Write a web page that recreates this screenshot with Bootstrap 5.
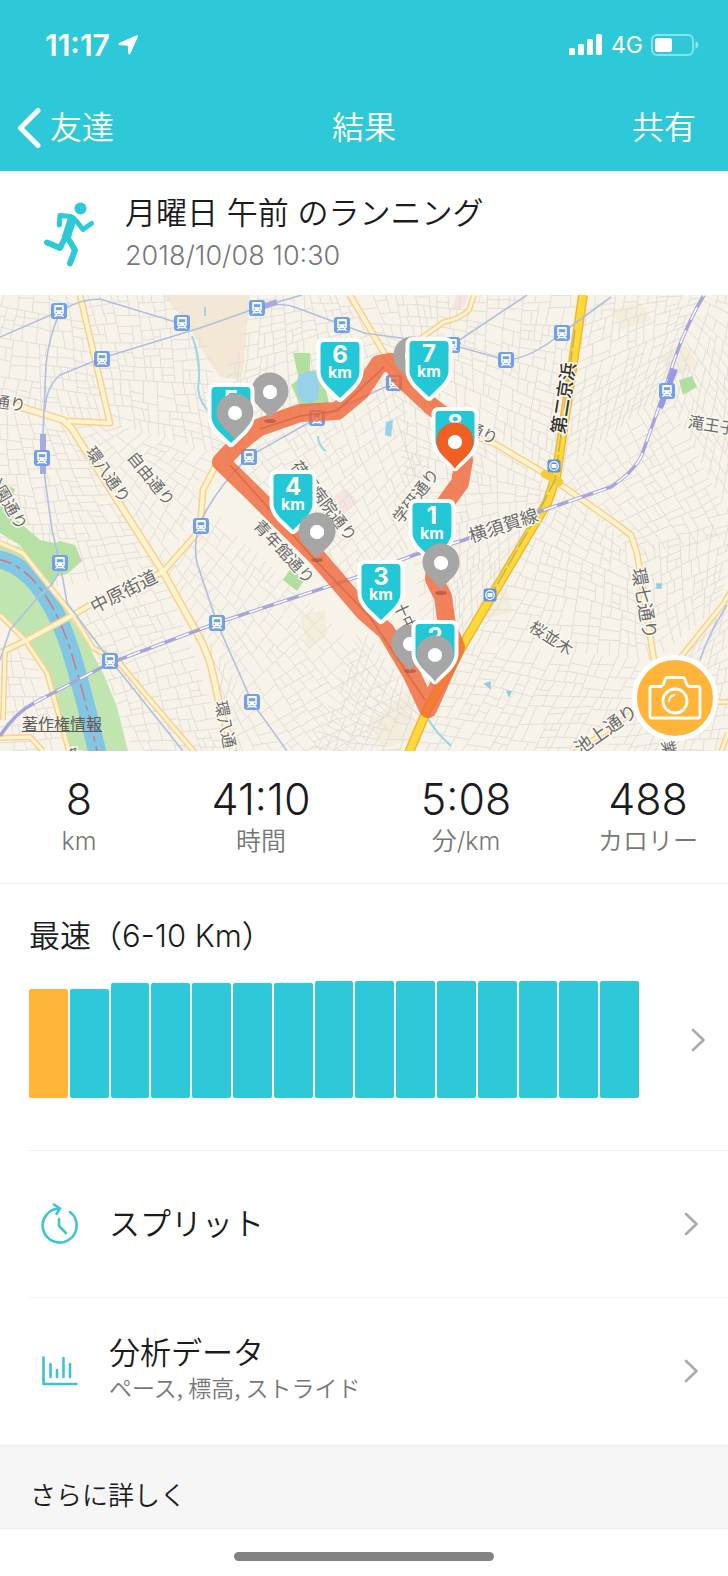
<!DOCTYPE html>
<html lang="ja">
<head>
<meta charset="utf-8">
<meta name="viewport" content="width=device-width, initial-scale=1">
<title>結果</title>
<link href="https://cdn.jsdelivr.net/npm/bootstrap@5.3.0/dist/css/bootstrap.min.css" rel="stylesheet">
<style>
:root{--teal:#2dc9d9;--amber:#ffb53a;--ink:#1c1c1e;--soft:#777}
body{font-family:Inter,"Noto Sans CJK JP",sans-serif;font-weight:350;color:var(--ink);background:#fff}
.app-top{background:var(--teal);color:#fff;padding-bottom:5px}
.status{height:90px;padding:0 29px 0 45px;font-size:30px;font-weight:600}
.status .net{font-size:23px;font-weight:400}
.topnav{height:76px;padding:0 16px;display:grid;grid-template-columns:1fr auto 1fr;align-items:center}
.topnav a,.topnav button{color:#fff;font-size:32px;line-height:40px;text-decoration:none;background:none;border:0;padding:0;font-weight:350}
.topnav h1{font-size:32px;line-height:40px;font-weight:350;margin:0}
.activity{padding:22px 30px 20px 43px;gap:30px}
.t-main{font-size:31px;line-height:40px;font-weight:350;margin:0}
.activity time{font-size:27px;line-height:38px;color:var(--soft);margin-top:4px}
.map-box{background:#f8f3e9}
.map-box svg.map{display:block;width:100%;height:auto}
.legal{left:22px;bottom:17px;font-size:16px;line-height:20px;color:#5c5c58;font-weight:400}
.legal:hover{color:#222}
.cam{right:10px;bottom:10px;width:86px;height:86px;border:5px solid #fff;background:var(--amber);border-radius:50%;padding:0}
.stats{display:grid;grid-template-columns:79fr 103fr 102fr 80fr;padding:20px 0 28px;border-bottom:1px solid #f0f0f0;text-align:center;margin:0}
.stats dt{font-size:25px;line-height:28px;font-weight:350;color:var(--soft)}
.stats dd{font-size:43px;line-height:56px;margin:0}
.fastest{padding:32px 0 0 29px}
.bars-row{margin-top:25px;padding:0 22px 52px 0;border-bottom:1px solid #f0f0f0;color:inherit;text-decoration:none}
.bars{height:117px;gap:2px;margin-right:52px}
.bars i{flex:1;background:var(--teal);border-radius:2px}
.bars i.best{background:var(--amber)}
.entry{margin-left:29px;padding-right:29px;height:147px;border-bottom:1px solid #f5f5f5;color:inherit;text-decoration:none}
.entry:last-child{border-bottom-color:#fff}
.entry .pic{width:80px;padding-left:11px}
.entry small{display:block;font-family:"Noto Sans CJK JP",sans-serif;font-size:23px;line-height:28px;color:var(--soft)}
.more{background:#f6f6f6;border:solid #eee;border-width:1px 0;padding:30px 30px 12px;font-size:26px;line-height:40px;margin:0;font-weight:350}
.home-bar{width:260px;height:9px;border-radius:5px;background:#838383;margin:23px auto 16px}
.lbl{font:400 16px "Noto Sans CJK JP",sans-serif;fill:#6b6b6b;stroke:#fbf8f0;stroke-width:3px;paint-order:stroke;text-anchor:middle;dominant-baseline:central}
.big{font-size:18px}
.dark{fill:#333;font-weight:500}
.shield text{fill:#fff;text-anchor:middle;font-family:Inter,sans-serif;font-weight:700}
.road-e{fill:none;stroke:#f8cf95}
.road-f{fill:none;stroke:#fff5cd}
.rail{fill:none;stroke:#b0c0df;stroke-width:1.6}
</style>
</head>
<body>
<header class="app-top">
  <div class="status d-flex align-items-center justify-content-between">
    <div class="d-flex align-items-center gap-2"><span>11:17</span>
      <svg width="20" height="20" viewBox="0 0 20 20"><path d="M18.500.8Q19.900.3 19.300 1.900L12 18.500Q11 20 10.600 18.200L10.400 10.200 1.800 9.700Q0 9.300 1.500 8.300Z" fill="#fff" stroke="#fff"/></svg></div>
    <div class="d-flex align-items-center gap-2">
      <svg width="34" height="22" viewBox="0 0 34 22" fill="#fff"><rect y="14" width="6" height="7" rx="1.500"/><rect x="9" y="10" width="6" height="11" rx="1.500"/><rect x="18" y="5" width="6" height="16" rx="1.500"/><rect x="27" y="0" width="6" height="21" rx="1.500"/></svg>
      <span class="net">4G</span>
      <svg width="48" height="22" viewBox="0 0 48 22"><rect x="1" y="1" width="41" height="20" rx="5" fill="none" stroke="#fff" stroke-opacity=".45" stroke-width="2"/><rect x="4" y="4" width="17" height="14" rx="2.500" fill="#fff"/><path d="M44.500 7q3 1.500 3 4t-3 4z" fill="#fff" opacity=".5"/></svg>
    </div>
  </div>
  <nav class="topnav" aria-label="結果">
    <a href="#" class="d-flex align-items-center"><svg width="26" height="42" viewBox="0 0 26 42"><path d="M22 3.500 4.500 21 22 38.500" fill="none" stroke="#fff" stroke-width="5" stroke-linecap="round" stroke-linejoin="round"/></svg><span class="ms-2">友達</span></a>
    <h1>結果</h1>
    <div class="text-end pe-3"><button type="button">共有</button></div>
  </nav>
</header>

<section class="activity d-flex align-items-center">
  <svg width="52" height="70" viewBox="0 -1 52 70" fill="none" stroke="#2dc9d9" stroke-linecap="round" stroke-linejoin="round"><circle cx="37.500" cy="8.500" r="6" fill="#2dc9d9" stroke="none"/><path d="M16.300 25 17 15.500 28 16.500Q31 17.500 34 22L40 29.500 48.500 23.500" stroke-width="5"/><path d="M28.500 21 23.500 37" stroke-width="9"/><path d="M22.500 37 17 48 4 42.500M24 37 32 50 27 63.500" stroke-width="6"/></svg>
  <div><h2 class="t-main">月曜日 午前 のランニング</h2><time class="d-block" datetime="2018-10-08T10:30">2018/10/08 10:30</time></div>
</section>

<section class="map-box position-relative">
<svg class="map" viewBox="0 0 728 456" role="img" aria-label="コースの地図">
  <defs>
    <g id="train"><rect x="-8" y="-8" width="16" height="16" rx="3" fill="#72a0e6"/><path d="M-3.800-6h7.600q1 0 1 1v7q0 1-1 1h-7.600q-1 0-1-1v-7q0-1 1-1z" fill="#fff"/><path d="M-3.200-3.800h6.400v3h-6.400z" fill="#72a0e6"/><circle cx="-2.800" cy="1.300" r=".8" fill="#72a0e6"/><circle cx="2.800" cy="1.300" r=".8" fill="#72a0e6"/><path d="M-2.500 3-4.500 6M2.500 3l2 3M-3.200 4.500h6.400" stroke="#fff" stroke-width="1.300"/></g>
    <g id="metro"><rect x="-6.500" y="-6.500" width="13" height="13" rx="2.500" fill="#5f93e3"/><circle r="4.300" fill="none" stroke="#fff" stroke-width="1.300"/><path d="M-2.500-2h5v4h-5z" fill="#fff"/></g>
    <path id="shieldShape" d="M-16 4H16Q19.500 4 19.500 8V34Q19.500 40 13 47.500L0 60-13 47.500Q-19.500 40-19.500 34V8Q-19.500 4-16 4Z"/>
    <path id="pin" fill-rule="evenodd" d="M0 28C-4 20-18.500 14-18.500 0A18.500 18.500 0 0 1 18.500 0C18.500 14 4 20 0 28ZM7 1A7 7 0 1 0-7 1 7 7 0 1 0 7 1Z"/>
  </defs>
  <path d="M163 0H250L242 85 220 82 200 52 190 32Z" fill="#f2e8d5"/>
  <path d="M456 0h12l-4 12-12 4z M335 200l11-7 12 14-15 11z" fill="#f7e3e1"/>
  <path d="M425 45l18-8 8 18-20 9zM610 15l30-8 12 18-30 10zM480 300l28-5 5 22-30 8zM300 320l25-5 2 25-20 12zM370 425l40-30 5 50-35 8zM660 60l25-10 15 22-30 10z" fill="#f5eddc"/>
  <g id="streets" fill="none" stroke="#dddcd8" stroke-width=".9"></g>
  <path d="M166 0H248L243 55 220 62 200 42 190 25Z" fill="#f2e8d5"/>
  <path d="M0 250 20 252 53 295 72 325 87 348 103 378 117 412 128 456H68L50 385 27 350 0 322Z" fill="#c1e5b0"/>
  <path d="M0 205 18 226 40 245 55 248 60 246 75 250 82 266 67 279 55 282 52 296 20 250 0 238Z M3 188l12 6-2 8-13-6z" fill="#b7e1a4"/>
  <path d="M293 58h17v18l11-2 8 34-28 4-10-22 8-6z M290 274l15 10-8 12-14-11z M679 85l13-4 5 11-14 8z" fill="#b2dfa0"/>
  <path d="M299 80q8-5 17-3 5 12 2 27-9 8-17 1-8-10-2-25z M386 127l7-2-2 17-6-2z" fill="#97d2ea"/>
  <path d="M192 41q10 25 6 52 1 15 14 27M205 12v9M318 141q0 10 8 15M426 420q8 16 25 31" fill="none" stroke="#9dd5e8" stroke-width="2"/>
  <path d="M485 389l5-2v6zM507 396l4 1-2 4zM657 289h4v4h-4z" fill="#8ecde6" stroke="#8ecde6" stroke-width="1.500"/>
  <path d="M-5 264C35 268 60 320 72 360S86 410 98 460" fill="none" stroke="#82c6e5" stroke-width="18"/>
  <path d="M-5 264C35 268 60 320 72 360S86 410 98 460" fill="none" stroke="#d27a72" stroke-width="1.500" stroke-dasharray="17 5 5 5"/>
  <g id="roads" stroke-linejoin="round"></g>
  <g stroke-linejoin="round" fill="none"><path d="M583 0 556 182 547 208 531 235 464 348 427 415 408 460" stroke="#efb739" stroke-width="10"/><path d="M583 0 556 182 547 208 531 235 464 348 427 415 408 460" stroke="#ffd936" stroke-width="7"/><path d="M545 179 559 187" stroke="#f8ca35" stroke-width="8" stroke-linecap="round"/><path d="M575 35 555 185 536 222 490 302" stroke="#b9b46b" stroke-width="1.500" stroke-dasharray="18 3"/></g>
  <g class="rail">
    <path d="M0 42 60 16Q80 4 100 4L182 29M60 16Q48 45 46 70L42 162 52 235 60 268 67 308 100 352 183 456M45 115Q46 92 60 80L102 63 200 33 257 13 302 0M257 13Q280 6 297 13L343 30 364 38 452 50 506 65Q530 64 562 38L611 2M452 50 527 0M200 228Q215 195 248 162L317 123 394 88M200 228Q193 250 197 268L217 328 252 407 287 456M60 268Q60 285 40 300L10 335 0 365M727 310Q708 340 700 365"/>
    <path d="M43 139v40M262 12l15-5M452 50l8-4" stroke="#aaaadf" stroke-width="6"/>
  </g>
  <g fill="none"><path d="M0 441Q15 418 34 408L110 368 217 328 357 282 414 260 464 245 544 215 611 192Q632 178 641 162L664 98Q680 40 704 0" stroke="#a5a5dc" stroke-width="3.500"/><path d="M34 408 110 368 217 328 357 282 414 260 464 245 544 215 611 192Q632 178 641 162L664 98Q680 40 704 0" stroke="#fff" stroke-width="1.600" stroke-dasharray="14 12"/><path d="M675 74 660 113" stroke="#9999e5" stroke-width="6"/></g>
  <g id="stations"></g>
  <g class="lbl">
    <text transform="translate(10 107) rotate(8)">通り</text>
    <text transform="translate(109 179) rotate(55)">環八通り</text>
    <text transform="translate(152 183) rotate(51)">自由通り</text>
    <text transform="translate(8 205) rotate(60)">公園通り</text>
    <text transform="translate(325 205) rotate(53)">荏原病院通り</text>
    <text transform="translate(285 256) rotate(47)">青年館通り</text>
    <text transform="translate(415 200) rotate(-52)">学研通り</text>
    <text class="big" transform="translate(503 229) rotate(-18)">横須賀線</text>
    <text transform="translate(712 129) rotate(9)">滝王子</text>
    <text transform="translate(483 137) rotate(25)">通り</text>
    <text class="big dark" transform="translate(562 103) rotate(-81)">第二京浜</text>
    <text class="big" transform="translate(123 295) rotate(-27)">中原街道</text>
    <text transform="translate(228 437) rotate(79)">環八通り</text>
    <text class="big" transform="translate(646 308) rotate(80)">環七通り</text>
    <text transform="translate(552 342) rotate(33)">桜並木</text>
    <text class="big" transform="translate(605 433) rotate(-35)">池上通り</text>
    <text transform="translate(406 321) rotate(65)">十中</text>
    <text transform="translate(74 459) rotate(-25)">多</text>
    <text transform="translate(670 453) rotate(75)">業</text>
  </g>
  <path fill="none" stroke="#ef6538" stroke-opacity=".8" stroke-linejoin="round" stroke-linecap="round" stroke-width="18" d="M436 258 434 284 443 302 447 330 456 352 428 414 411 378 386 336 364 317 317 262 253 198 221 167Q240 145 260 132L300 118 337 116 361 96 379 69 391 67 402 84 431 111 454 128 464 165 460 188 444 210 432 230 436 258"/>
  <path d="M230 170 317 267 370 322 411 384 425 405M260 134 300 121 337 116 384 72" stroke="#c95b3c" stroke-width="1.500" opacity=".6" fill="none"/>
  <g fill="#8a4638" opacity=".5"><ellipse cx="270" cy="126" rx="6" ry="2"/><ellipse cx="317" cy="265" rx="6" ry="2"/><ellipse cx="441" cy="298" rx="6" ry="2"/><ellipse cx="410" cy="376" rx="6" ry="2"/></g>
  <g id="markers"></g>
</svg>
<a href="#" class="legal position-absolute">著作権情報</a>
<button type="button" class="cam position-absolute d-flex align-items-center justify-content-center" aria-label="写真を追加"><svg width="54" height="46" viewBox="0 0 54 46" fill="none" stroke="#fff" stroke-width="2.800" stroke-linejoin="round"><path d="M4 11.500H12Q14.500 11.500 15.500 9L17.500 3.500Q18 2.500 19.500 2.500H34.500Q36 2.500 36.500 3.500L38.500 9Q39.500 11.500 42 11.500H50Q52 11.500 52 13.500V41Q52 43 50 43H4Q2 43 2 41V13.500Q2 11.500 4 11.500Z"/><circle cx="27" cy="26" r="12"/><path d="M21 26Q21.500 21 26.500 20" stroke-width="2" stroke-linecap="round"/></svg></button>
</section>

<dl class="stats">
  <div class="d-flex flex-column-reverse"><dt>km</dt><dd>8</dd></div>
  <div class="d-flex flex-column-reverse"><dt>時間</dt><dd>41:10</dd></div>
  <div class="d-flex flex-column-reverse"><dt>分/km</dt><dd>5:08</dd></div>
  <div class="d-flex flex-column-reverse"><dt>カロリー</dt><dd>488</dd></div>
</dl>

<section class="fastest">
  <h2 class="t-main">最速（6-10 Km）</h2>
  <a href="#" class="bars-row d-flex align-items-center" aria-label="最速">
    <span class="bars d-flex align-items-end flex-grow-1" id="bars"></span>
    <svg width="15" height="24" viewBox="0 0 15 24"><path d="M2 2 12.500 12 2 22" fill="none" stroke="#aaa" stroke-width="2.600" stroke-linecap="round" stroke-linejoin="round"/></svg>
  </a>
</section>
<div>
  <a href="#" class="entry d-flex align-items-center">
    <span class="pic"><svg width="38" height="42" viewBox="0 0 38 42" fill="none" stroke="#3cc4d2" stroke-width="2.600" stroke-linecap="round" stroke-linejoin="round"><path d="M30 9A17 17 0 1 1 20 5.500M14 1.500 20 5.500 16.500 11M19 16V23L26 30"/></svg></span>
    <span class="t-main flex-grow-1">スプリット</span>
    <svg width="15" height="24" viewBox="0 0 15 24"><path d="M2 2 12.500 12 2 22" fill="none" stroke="#aaa" stroke-width="2.600" stroke-linecap="round" stroke-linejoin="round"/></svg>
  </a>
  <a href="#" class="entry d-flex align-items-center">
    <span class="pic"><svg width="38" height="30" viewBox="0 0 38 30" fill="none" stroke="#3cc4d2" stroke-width="2.600" stroke-linecap="round" stroke-linejoin="round"><path d="M3.500 1.500V28H36.500M10.500 8V21M17 14V21M23.500 2V21M30 8V21"/></svg></span>
    <span class="flex-grow-1 pb-2"><span class="t-main d-block">分析データ</span><small>ペース, 標高, ストライド</small></span>
    <svg width="15" height="24" viewBox="0 0 15 24"><path d="M2 2 12.500 12 2 22" fill="none" stroke="#aaa" stroke-width="2.600" stroke-linecap="round" stroke-linejoin="round"/></svg>
  </a>
</div>
<h2 class="more">さらに詳しく</h2>
<div class="home-bar"></div>

<script src="https://cdn.jsdelivr.net/npm/bootstrap@5.3.0/dist/js/bootstrap.bundle.min.js"></script>
<script>
// pace bars, height as a share of the tallest
const paces = [109,109,115,115,115,115,115,117,117,117,117,117,117,117,117];
document.getElementById('bars').innerHTML = paces.map((p,i)=>`<i class="${i?'':'best'}" style="height:${p/117*100}%"></i>`).join('');

// main roads: [path, width]
const roads = [
 ['M80 0 110 128 68 126',6],['M0 107 24 113 63 125Q72 132 77 142L163 277 197 338Q208 358 212 375L220 412 235 460',7],
 ['M0 358 27 345 73 320 90 310 163 277 200 235 203 195 217 168',6],['M0 248 23 258 50 292 73 320 93 353 117 365 150 405 197 460',5],
 ['M0 320 25 345 47 378 70 460',5],['M5 358 3 425M0 443 30 442 43 456',5],
 ['M350 0 387 63 440 115 477 142 497 150 544 178 611 225 631 240 637 258 654 365',6],['M474 0 469 15Q460 24 444 27L414 48',5],
 ['M571 460 637 415 684 358 724 308 740 280M714 407h20M728 438l-8 22',5]];
document.getElementById('roads').innerHTML =
 roads.map(r=>`<path class="road-e" d="${r[0]}" stroke-width="${r[1]+1}"/>`).join('')+
 roads.map(r=>`<path class="road-f" d="${r[0]}" stroke-width="${r[1]-2}"/>`).join('');

// side streets: blocks split again and again into smaller ones
let seed = 11; const rnd = () => (seed = (seed*16807)%2147483647)/2147483647;
let d = '';
const mix = (a,b,t)=>[a[0]+(b[0]-a[0])*t,a[1]+(b[1]-a[1])*t], len=(a,b)=>Math.hypot(a[0]-b[0],a[1]-b[1]);
const pt = p => p.map(v=>v.toFixed(1)).join(' ');
function split(a,b,c,e){
  const w=(len(a,b)+len(c,e))/2, h=(len(b,c)+len(a,e))/2;
  if (w*h < 100+rnd()*260) return;
  const t=.34+rnd()*.32, u=Math.min(.7,Math.max(.3,t+(rnd()-.5)*.16));
  if (w>h){ const m=mix(a,b,t), n=mix(e,c,u); d+=`M${pt(m)} ${pt(n)}`; split(a,m,n,e); split(m,b,c,n); }
  else { const m=mix(a,e,t), n=mix(b,c,u); d+=`M${pt(m)} ${pt(n)}`; split(a,b,n,m); split(m,n,c,e); }
}
[[[0,-20],[80,0],[110,128],[-30,105]],[[80,0],[200,-10],[225,160],[110,128]],[[240,-20],[355,0],[390,70],[215,165]],
 [[-20,110],[68,126],[163,277],[-20,300]],[[68,126],[110,128],[225,160],[163,277]],[[220,165],[390,70],[440,210],[360,320]],
 [[163,277],[205,210],[425,415],[300,480]],[[163,277],[300,480],[235,470],[200,340]],[[73,320],[163,277],[235,470],[140,470]],
 [[0,350],[30,350],[70,460],[0,470]],[[355,0],[583,-10],[556,182],[390,70]],[[390,70],[556,182],[531,235],[430,400]],
 [[583,0],[705,-10],[664,98],[556,182]],[[705,-10],[760,0],[740,240],[664,98]],[[556,182],[664,98],[740,240],[635,260]],
 [[556,182],[635,255],[655,365],[464,348]],[[464,348],[655,365],[590,470],[411,460]],[[635,255],[740,220],[720,310],[655,365]],
 [[684,358],[740,290],[740,470],[590,470]],[[300,480],[360,330],[425,415],[411,460]]].forEach(q=>split(...q));
document.getElementById('streets').innerHTML=`<path d="${d}"/>`;

const at = (id,list)=>list.map(p=>`<use href="#${id}" x="${p[0]}" y="${p[1]}"/>`).join('');
document.getElementById('stations').innerHTML =
 at('train',[[59,16],[102,64],[182,28],[257,13],[342,30],[42,163],[317,123],[249,162],[201,231],[60,268],[110,366],[217,328],[252,407],[506,65],[562,38],[667,96],[452,50],[394,88]])+
 at('metro',[[554,171],[490,300]]);

// kilometre shields and photo pins, back to front
const shield=(n,x,y)=>`<g class="shield" transform="translate(${x} ${y})"><use href="#shieldShape" fill="#22c8d6" stroke="#fff" stroke-width="8" stroke-linejoin="round" paint-order="stroke"/><text y="25" font-size="24">${n}</text><text y="40" font-size="16">km</text></g>`;
const pin=(x,y,c='#a6a6a6')=>`<use href="#pin" x="${x}" y="${y}" fill="${c}"/><circle cx="${x}" cy="${y+1}" r="7" fill="#fff"/>`;
document.getElementById('markers').innerHTML =
 pin(270,96)+pin(412,60)+shield(6,340,43)+shield(7,429,42)+shield(5,231,88)+pin(235,117)+
 shield(8,455,112)+pin(455,146,'#f15f22')+shield(4,293,175)+pin(317,236)+shield(1,432,204)+pin(441,267)+
 pin(410,348)+shield(3,381,265)+shield(2,435,325)+pin(435,359);
</script>
</body>
</html>
